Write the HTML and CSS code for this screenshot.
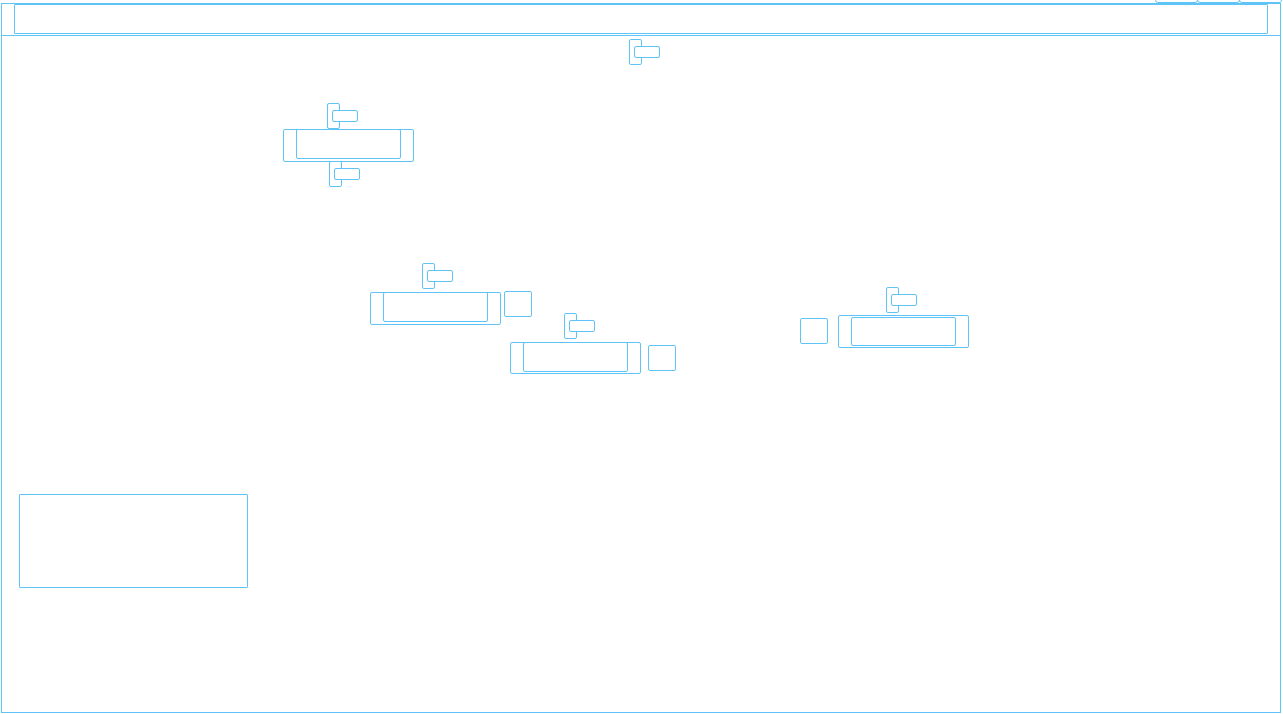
FILE: index.html
```html
<!DOCTYPE html>
<html lang="en">
<head>
    <meta charset="UTF-8">
    <meta name="viewport" content="width=device-width, initial-scale=1.0">
    <title>Wireframe</title>
    <link rel="stylesheet" href="styles.css">
</head>
<body>
    <div class="tabs">
        <div class="tab"></div>
        <div class="tab"></div>
        <div class="tab"></div>
    </div>
    <div class="frame">
        <div class="header">
            <div class="header-box"></div>
        </div>
        <div class="canvas">
            <div class="pin p1"><div class="tag"></div></div>

            <div class="pin p2"><div class="tag"></div></div>
            <div class="field f1"><div class="field-inner"></div></div>
            <div class="pin p3"><div class="tag"></div></div>

            <div class="pin p4"><div class="tag"></div></div>
            <div class="field f2"><div class="field-inner"></div></div>
            <div class="square s1"></div>

            <div class="pin p5"><div class="tag"></div></div>
            <div class="field f3"><div class="field-inner"></div></div>
            <div class="square s2"></div>

            <div class="pin p6"><div class="tag"></div></div>
            <div class="square s3"></div>
            <div class="field f4"><div class="field-inner"></div></div>

            <div class="panel"></div>
        </div>
    </div>
</body>
</html>
```

FILE: styles.css
```css
body{
    margin: 0;
    background: #fff;
    font-family: "Liberation Sans", Arial, sans-serif;
    overflow: hidden;
}
.tabs{
    position: absolute;
    top: -17px; left: 1155px;
    display: flex;
}
.tab{
    width: 43px; height: 20px;
    box-sizing: border-box;
    border: 1px solid #5ec4f7;
    border-radius: 0 0 3px 3px;
}
.tab + .tab{ margin-left: -1px; }
.frame{
    margin: 3px 0 0 1px;
    width: 1280px; height: 710px;
    box-sizing: border-box;
    border: 1px solid #5ec4f7;
    display: flex;
    flex-direction: column;
}
.header{
    padding: 0 12px 1px 12px;
    border-bottom: 1px solid #5ec4f7;
}
.header-box{
    height: 30px;
    box-sizing: border-box;
    border: 1px solid #5ec4f7;
    border-radius: 1px;
}
.canvas{
    position: relative;
    flex: 1;
}

/* label widget: tall pin with a small tag over it */
.pin{
    position: absolute;
    width: 13px; height: 26px;
    box-sizing: border-box;
    border: 1px solid #5ec4f7;
    border-radius: 2px;
}
.tag{
    position: absolute;
    left: 4px; top: 6px;
    width: 26px; height: 12px;
    box-sizing: border-box;
    border: 1px solid #5ec4f7;
    border-radius: 2px;
    background: #fff;
}
.field{
    position: absolute;
    width: 131px; height: 33px;
    box-sizing: border-box;
    border: 1px solid #5ec4f7;
    border-radius: 2px;
    display: flex;
    padding: 0 12px;
}
.field-inner{
    width: 105px; height: 30px;
    box-sizing: border-box;
    border: 1px solid #5ec4f7;
    border-radius: 2px;
    margin-top: -1px;
}
.f3{ height: 32px; }
.f4 .field-inner{ margin-top: 1px; height: 29px; }
.square{
    position: absolute;
    width: 28px; height: 26px;
    box-sizing: border-box;
    border: 1px solid #5ec4f7;
    border-radius: 2px;
}
.panel{
    position: absolute;
    left: 17px; top: 458px;
    width: 229px; height: 94px;
    box-sizing: border-box;
    border: 1px solid #5ec4f7;
    border-radius: 1px;
}

/* canvas coordinates */
.p1{ left: 627px; top: 3px; }
.p2{ left: 325px; top: 67px; }
.p3{ left: 327px; top: 125px; }
.p4{ left: 420px; top: 227px; }
.p5{ left: 562px; top: 277px; }
.p6{ left: 884px; top: 251px; }
.f1{ left: 281px; top: 93px; }
.f2{ left: 368px; top: 256px; }
.f3{ left: 508px; top: 306px; }
.f4{ left: 836px; top: 279px; }
.s1{ left: 502px; top: 255px; }
.s2{ left: 646px; top: 309px; }
.s3{ left: 798px; top: 282px; }
```
